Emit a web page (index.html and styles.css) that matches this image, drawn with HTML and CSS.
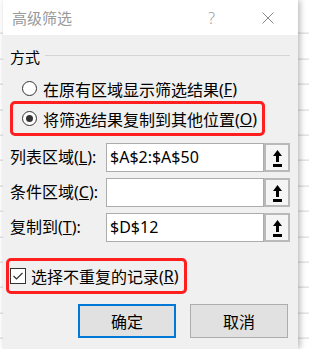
FILE: index.html
```html
<!DOCTYPE html>
<html>
    <head>
        <title>高级筛选</title>
        <meta charset="utf-8">
        <link rel="stylesheet" href="styles.css">
    </head>
    <body>
        <div class="dialog">
            <div class="titlebar">
                <span class="title">高级筛选</span>
                <span class="help">?</span>
                <svg class="close" width="12" height="12" viewBox="0 0 12 12">
                    <path d="M0.5 0.5 L11.5 11.5 M11.5 0.5 L0.5 11.5" stroke="#8a8a8a" stroke-width="1" fill="none"/>
                </svg>
            </div>

            <div class="content">
                <div class="group_head">
                    <span>方式</span>
                    <i class="rule"></i>
                </div>

                <label class="option">
                    <span class="radio"></span>在原有区域显示筛选结果(<u>F</u>)
                </label>
                <label class="option mark">
                    <span class="radio on"></span>将筛选结果复制到其他位置(<u>O</u>)
                </label>

                <div class="field first">
                    <span class="label">列表区域(<u>L</u>):</span>
                    <span class="input">$A$2:$A$50</span>
                    <span class="pick">
                        <svg width="9" height="17" viewBox="0 0 9 17"><polygon points="4.5,0 9,6 6,6 6,12 3,12 3,6 0,6" fill="#000"/><rect x="0" y="14" width="9" height="3" fill="#000"/></svg>
                    </span>
                </div>
                <div class="field">
                    <span class="label">条件区域(<u>C</u>):</span>
                    <span class="input"></span>
                    <span class="pick">
                        <svg width="9" height="17" viewBox="0 0 9 17"><polygon points="4.5,0 9,6 6,6 6,12 3,12 3,6 0,6" fill="#000"/><rect x="0" y="14" width="9" height="3" fill="#000"/></svg>
                    </span>
                </div>
                <div class="field">
                    <span class="label">复制到(<u>T</u>):</span>
                    <span class="input">$D$12</span>
                    <span class="pick">
                        <svg width="9" height="17" viewBox="0 0 9 17"><polygon points="4.5,0 9,6 6,6 6,12 3,12 3,6 0,6" fill="#000"/><rect x="0" y="14" width="9" height="3" fill="#000"/></svg>
                    </span>
                </div>

                <label class="check mark">
                    <span class="box">
                        <svg width="14" height="14" viewBox="0 0 14 14"><path d="M2.5 7 L5.5 10 L11.5 4" stroke="#333" stroke-width="1.2" fill="none"/></svg>
                    </span>选择不重复的记录(<u>R</u>)
                </label>

                <div class="actions">
                    <button type="button" class="primary">确定</button>
                    <button type="button">取消</button>
                </div>
            </div>
        </div>
    </body>
</html>
```

FILE: styles.css
```css
html, body {
    height: 100%;
}
body {
    margin: 0;
    padding-left: 3px;
    overflow: hidden;
    font-family: "Noto Sans", "Noto Sans CJK SC", sans-serif;
    font-size: 16px;
    color: #000;
    background-color: #fff;
    background-image: repeating-linear-gradient(to bottom, transparent 0, transparent 24.4px, #d4d4d4 24.4px, #d4d4d4 25.4px);
    background-position: 0 8.6px;
}
.dialog {
    width: 295px;
    height: 100%;
    background-color: #f0f0f0;
    box-shadow: 2px 0 6px rgba(0, 0, 0, 0.28);
}
.titlebar {
    height: 35px;
    background-color: #fff;
    display: flex;
    align-items: center;
    padding: 0 24px 0 9px;
}
.title {
    font-size: 15px;
    color: #999;
}
.help {
    margin-left: auto;
    font-size: 16px;
    color: #9a9a9a;
    font-weight: 300;
}
.close {
    margin-left: 47px;
}
.content {
    padding: 0 8px 0 0;
}
.group_head {
    display: flex;
    height: 22px;
    line-height: 22px;
    margin-top: 11px;
    padding-left: 7px;
    font-size: 15px;
}
.rule {
    flex: 1;
    height: 1px;
    margin: 9px 0 0 5px;
    background-color: #d5d5d5;
}
.option {
    display: flex;
    align-items: center;
    height: 23px;
    margin-top: 9px;
    padding-left: 19px;
}
.option.mark {
    box-sizing: border-box;
    width: 255px;
    height: 35px;
    margin: 1px 0 0 7px;
    padding-left: 9px;
}
.mark {
    border: 3px solid #ff1f1f;
    border-radius: 5px;
}
.radio {
    box-sizing: border-box;
    width: 15px;
    height: 15px;
    margin-right: 6px;
    border: 1px solid #333;
    border-radius: 50%;
    background-color: #fff;
    display: flex;
    align-items: center;
    justify-content: center;
}
.radio.on::after {
    content: "";
    width: 7px;
    height: 7px;
    border-radius: 50%;
    background-color: #333;
}
.field {
    display: flex;
    height: 29px;
    margin-top: 6px;
    padding-left: 7px;
}
.field.first {
    margin-top: 7px;
}
.label {
    width: 96px;
    line-height: 29px;
}
.input {
    box-sizing: border-box;
    flex: 1;
    border: 1px solid #acacac;
    background-color: #fff;
    padding-left: 3px;
    line-height: 26px;
}
.pick {
    box-sizing: border-box;
    width: 26px;
    border: 2px solid #b9b9b9;
    background-color: #f5f5f5;
    display: flex;
    justify-content: center;
    padding-top: 5px;
}
.check {
    box-sizing: border-box;
    display: flex;
    align-items: center;
    width: 181px;
    height: 36px;
    margin: 16px 0 0 3px;
    padding-left: 1px;
}
.box {
    box-sizing: border-box;
    width: 16px;
    height: 16px;
    margin-right: 5px;
    border: 1px solid #333;
    background-color: #fff;
    display: flex;
    align-items: center;
    justify-content: center;
}
.actions {
    display: flex;
    justify-content: flex-end;
    gap: 14px;
    margin-top: 10px;
    padding-right: 2px;
}
button {
    box-sizing: border-box;
    width: 98px;
    height: 34px;
    font-family: "Noto Sans", "Noto Sans CJK SC", sans-serif;
    font-size: 16px;
    color: #000;
    background-color: #e1e1e1;
    border: 1px solid #adadad;
    padding: 0;
}
button.primary {
    border: 2px solid #0078d7;
}
```
